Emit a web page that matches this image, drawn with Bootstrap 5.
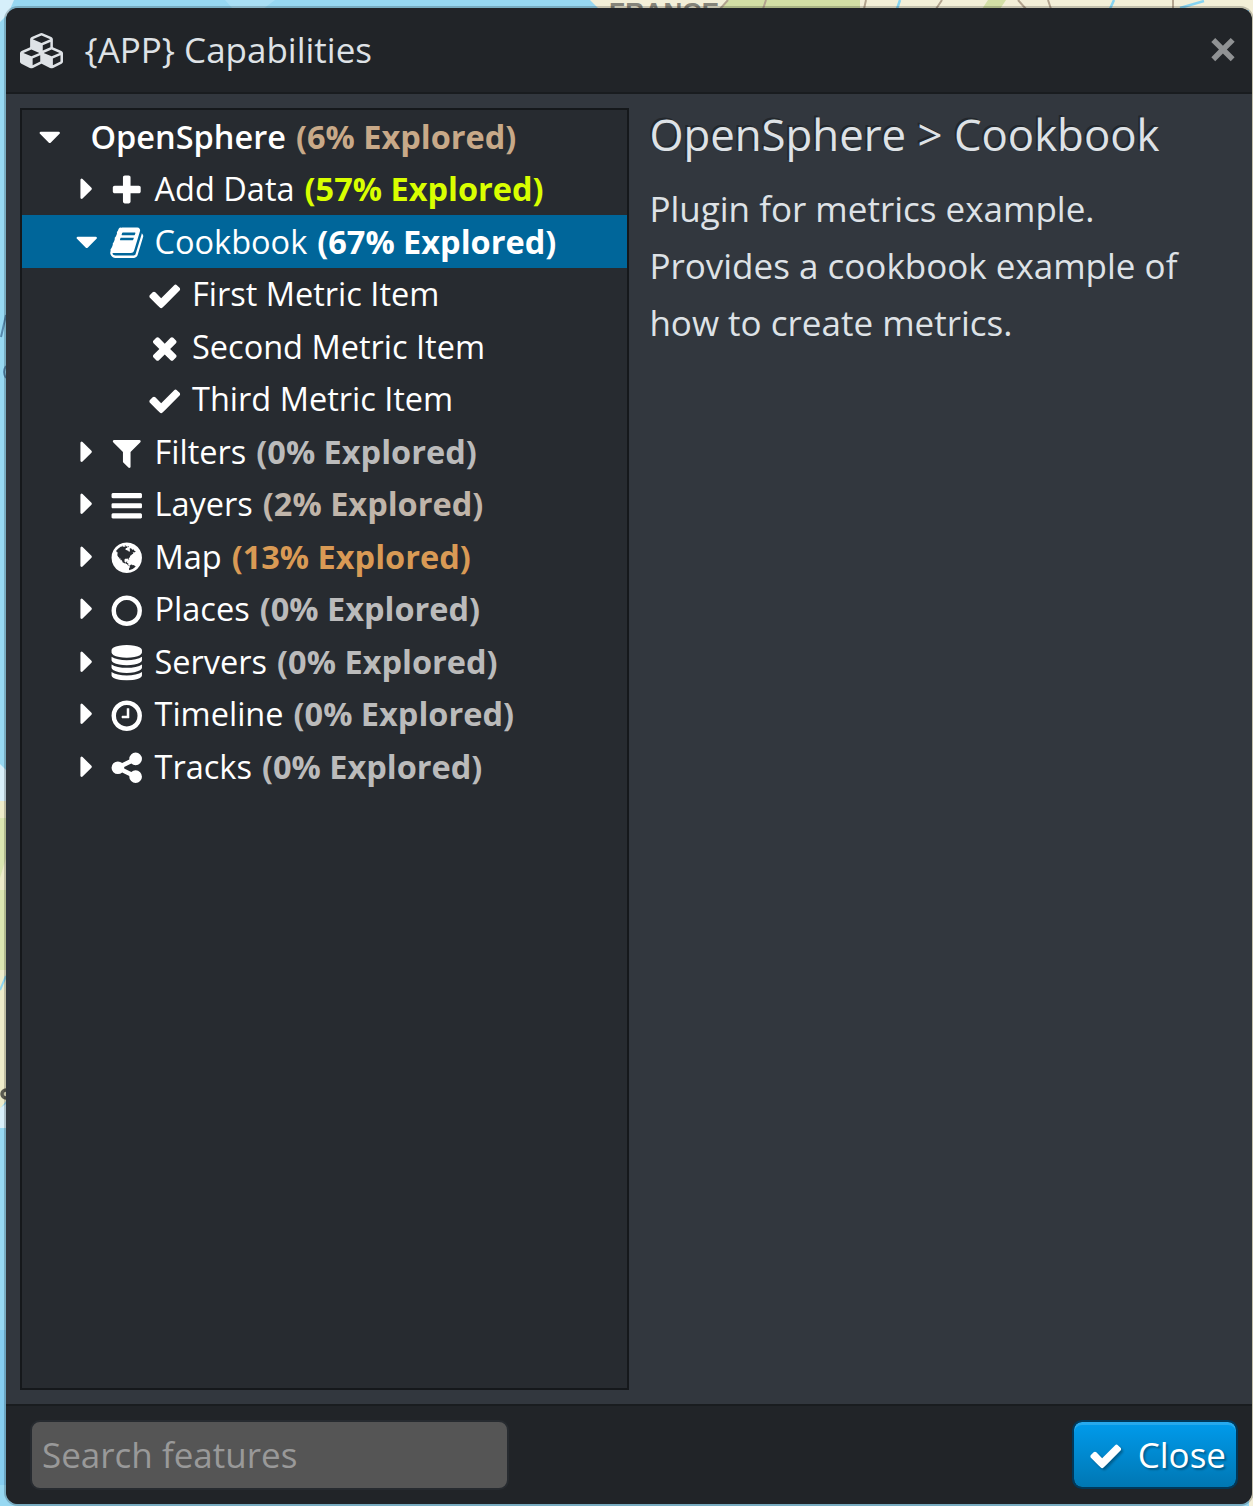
<!DOCTYPE html>
<html lang="en">
<head>
<meta charset="utf-8">
<title>{APP} Capabilities</title>
<meta name="viewport" content="width=device-width, initial-scale=1">
<link href="https://cdn.jsdelivr.net/npm/bootstrap@5.3.0/dist/css/bootstrap.min.css" rel="stylesheet">
<style>
  html, body { height: 100%; }
  body { font-family: "Open Sans", "Noto Sans", sans-serif; font-size: 35px; line-height: 1.5; color: #dee2e6; background: #97d8f2; overflow: hidden; }
  .map-back { position: absolute; inset: 0; width: 1253px; height: 1506px; z-index: 0; }
  .stage { height: 1506px; padding: 6px 0 0 4px; z-index: 1; }
  .win { width: 1250px; height: 1500px; border: 2px solid rgba(0,0,0,.2); border-radius: 14px; background-clip: padding-box; background-color: #32373e; overflow: hidden; }
  .win-head { height: 86px; padding: 0 14px 2px; background: #212428; border-bottom: 2px solid #191c1f; }
  .win-head .ico { width: 43px; margin-top: 4px; }
  .win-title { font-size: 35px; line-height: 1; margin-left: 21.5px; font-weight: 400; }
  .win-x { color: #909294; padding: 0 0 2px; border: 0; background: none; line-height: 1; font-size: 52.5px; font-weight: 700; }
  .win-main { padding: 14px; gap: 20.4px; min-height: 0; }
  .tree { width: 609px; border: 2px solid #15181b; background: #272b30; color: #fff; font-size: 32.5px; }
  .tree-row { height: 52.5px; white-space: nowrap; line-height: 52px; padding-top: 1px; }
  .tree-row.lv0 { padding-left: 10px; }
  .tree-row.lv1 { padding-left: 47px; }
  .tree-row.lv2 { padding-left: 125px; }
  .tree-row.active { background: #00669a; }
  .tree-row b { font-weight: 700; margin-left: 10px; }
  .ico { width: 35.5px; height: 35.5px; fill: currentColor; flex: none; }
  .twist { margin-right: 4.5px; position: relative; top: -.5px; }
  .kind { margin-right: 10px; position: relative; top: 1px; }
  .lv2 .kind { margin-right: 9.5px; }
  .lbl0 { margin-left: 23px; font-weight: 600; }
  .lv0 .ico { margin-top: -1px; }
  .p0 { color: #bbb; } .p2 { color: #c0b5aa; } .p6 { color: #c8a988; } .p13 { color: #d99a55; } .p57 { color: #d9ff00; }
  .info h3 { font-size: 43.75px; line-height: 53px; margin: 0 0 19px; font-weight: 400; text-shadow: -2px -2px 0 rgba(0,0,0,.3); }
  .info p { line-height: 57px; margin: 0; width: 560px; }
  .win-foot { height: 100px; padding: 14px 14px 14px 24px; background: #212428; border-top: 2px solid #191c1f; }
  .find { width: 479px; height: 70px; font-size: 35px; padding: 0 10px 2px; border: 2px solid #272b30; border-radius: 10px; background: #555 !important; }
  .find::placeholder { color: #999; opacity: 1; }
  .btn-go { width: 166px; height: 69px; margin-bottom: 1px; font-size: 35px; line-height: 1; color: #fff; padding: 0 10px 0 14px; border: 2px solid #00385a; border-radius: 10px; background: linear-gradient(#009bec, #0077b3) padding-box; box-shadow: inset 0 3px 0 rgba(255,255,255,.15); text-shadow: 2px 2px 2px rgba(0,0,0,.3); }
  .btn-go .ico { filter: drop-shadow(2px 2px 1px rgba(0,0,0,.3)); margin-top: 3px; }
</style>
</head>
<body>
<svg class="d-none" aria-hidden="true">
  <symbol id="check" viewBox="0 0 1792 1792"><path d="M1671 566q0 40-28 68l-724 724-136 136q-28 28-68 28t-68-28l-136-136-362-362q-28-28-28-68t28-68l136-136q28-28 68-28t68 28l294 295 656-657q28-28 68-28t68 28l136 136q28 28 28 68z"/></symbol>
  <symbol id="times" viewBox="0 0 1792 1792"><path d="M1490 1322q0 40-28 68l-136 136q-28 28-68 28t-68-28l-294-294-294 294q-28 28-68 28t-68-28l-136-136q-28-28-28-68t28-68l294-294-294-294q-28-28-28-68t28-68l136-136q28-28 68-28t68 28l294 294 294-294q28-28 68-28t68 28l136 136q28 28 28 68t-28 68l-294 294 294 294q28 28 28 68z"/></symbol>
  <symbol id="plus" viewBox="0 0 1792 1792"><path d="M1600 736v192q0 40-28 68t-68 28h-416v416q0 40-28 68t-68 28h-192q-40 0-68-28t-28-68v-416h-416q-40 0-68-28t-28-68v-192q0-40 28-68t68-28h416v-416q0-40 28-68t68-28h192q40 0 68 28t28 68v416h416q40 0 68 28t28 68z"/></symbol>
  <symbol id="filter" viewBox="0 0 1792 1792"><path d="M1595 295q17 41-14 70l-493 493v742q0 42-39 59-13 5-25 5-27 0-45-19l-256-256q-19-19-19-45v-486l-493-493q-31-29-14-70 17-39 59-39h1280q42 0 59 39z"/></symbol>
  <symbol id="bars" viewBox="0 0 1792 1792"><path d="M1664 1344v128q0 26-19 45t-45 19h-1408q-26 0-45-19t-19-45v-128q0-26 19-45t45-19h1408q26 0 45 19t19 45zm0-512v128q0 26-19 45t-45 19h-1408q-26 0-45-19t-19-45v-128q0-26 19-45t45-19h1408q26 0 45 19t19 45zm0-512v128q0 26-19 45t-45 19h-1408q-26 0-45-19t-19-45v-128q0-26 19-45t45-19h1408q26 0 45 19t19 45z"/></symbol>
  <symbol id="circle" viewBox="0 0 1792 1792"><path d="M896 352q-148 0-273 73t-198 198-73 273 73 273 198 198 273 73 273-73 198-198 73-273-73-273-198-198-273-73zm768 544q0 209-103 385.5t-279.5 279.5-385.5 103-385.5-103-279.5-279.5-103-385.5 103-385.5 279.5-279.5 385.5-103 385.5 103 279.5 279.5 103 385.5z"/></symbol>
  <symbol id="clock" viewBox="0 0 1792 1792"><path d="M1024 544v448q0 14-9 23t-23 9h-320q-14 0-23-9t-9-23v-64q0-14 9-23t23-9h224v-352q0-14 9-23t23-9h64q14 0 23 9t9 23zm416 352q0-148-73-273t-198-198-273-73-273 73-198 198-73 273 73 273 198 198 273 73 273-73 198-198 73-273zm224 0q0 209-103 385.5t-279.5 279.5-385.5 103-385.5-103-279.5-279.5-103-385.5 103-385.5 279.5-279.5 385.5-103 385.5 103 279.5 279.5 103 385.5z"/></symbol>
  <symbol id="database" viewBox="0 0 1792 1792"><path d="M896 768q237 0 443-43t325-127v170q0 69-103 128t-280 93.5-385 34.5-385-34.5-280-93.5-103-128v-170q119 84 325 127t443 43zm0 768q237 0 443-43t325-127v170q0 69-103 128t-280 93.5-385 34.5-385-34.5-280-93.5-103-128v-170q119 84 325 127t443 43zm0-384q237 0 443-43t325-127v170q0 69-103 128t-280 93.5-385 34.5-385-34.5-280-93.5-103-128v-170q119 84 325 127t443 43zm0-1152q208 0 385 34.5t280 93.5 103 128v128q0 69-103 128t-280 93.5-385 34.5-385-34.5-280-93.5-103-128v-128q0-69 103-128t280-93.5 385-34.5z"/></symbol>
  <symbol id="share" viewBox="0 0 1792 1792"><path d="M1344 1024q133 0 226.5 93.5t93.5 226.5-93.5 226.5-226.5 93.5-226.5-93.5-93.5-226.5q0-12 2-34l-360-180q-92 86-218 86-133 0-226.5-93.5t-93.5-226.5 93.5-226.5 226.5-93.5q126 0 218 86l360-180q-2-22-2-34 0-133 93.5-226.5t226.5-93.5 226.5 93.5 93.5 226.5-93.5 226.5-226.5 93.5q-126 0-218-86l-360 180q2 22 2 34t-2 34l360 180q92-86 218-86z"/></symbol>
  <symbol id="down" viewBox="0 0 1792 1792"><path d="M1408 704q0 26-19 45l-448 448q-19 19-45 19t-45-19l-448-448q-19-19-19-45t19-45 45-19h896q26 0 45 19t19 45z"/></symbol>
  <symbol id="right" viewBox="0 0 1792 1792"><path d="M1152 896q0 26-19 45l-448 448q-19 19-45 19t-45-19-19-45v-896q0-26 19-45t45-19 45 19l448 448q19 19 19 45z"/></symbol>
  <symbol id="book" viewBox="0 0 1792 1792"><path d="M1703 478q40 57 18 129l-275 906q-19 64-76.5 107.5t-122.5 43.5h-923q-77 0-148.5-53.5t-99.5-131.5q-24-67-2-127 0-4 3-27t4-37q1-8-3-21.5t-3-19.5q2-11 8-21t16.5-23.5 16.5-23.5q23-38 45-91.5t30-91.5q3-10 .5-30t-.5-28q3-11 17-28t17-23q21-36 42-92t25-90q1-9-2.5-32t.5-28q4-13 22-30.5t22-22.5q19-26 42.5-84.5t27.5-96.5q1-8-3-25.5t-2-26.5q2-8 9-18t18-23 17-21q8-12 16.5-30.5t15-35 16-36 19.5-32 26.5-23.5 36-11.5 47.5 5.5l-1 3q38-9 51-9h761q74 0 114 56t18 130l-274 906q-36 119-71.5 153.5t-128.5 34.5h-869q-27 0-38 15-11 16-1 43 24 70 144 70h923q29 0 56-15.5t35-41.5l300-987q7-22 5-57 38 15 59 43zm-1064 2q-4 13 2 22.5t20 9.5h608q13 0 25.5-9.5t16.5-22.5l21-64q4-13-2-22.5t-20-9.5h-608q-13 0-25.5 9.5t-16.5 22.5zm-83 256q-4 13 2 22.5t20 9.5h608q13 0 25.5-9.5t16.5-22.5l21-64q4-13-2-22.5t-20-9.5h-608q-13 0-25.5 9.5t-16.5 22.5z"/></symbol>
  <symbol id="globe" viewBox="0 0 1792 1792"><path d="M896 128q209 0 385.5 103t279.5 279.5 103 385.5-103 385.5-279.5 279.5-385.5 103-385.5-103-279.5-279.5-103-385.5 103-385.5 279.5-279.5 385.5-103zm274 521q-2 1-9.5 9.5t-13.5 9.5q2 0 4.5-5t5-11 3.5-7q6-7 22-15 14-6 52-12 34-8 51 11-2-2 9.5-13t14.5-12q3-2 15-4.5t15-7.5l2-22q-12 1-17.5-7t-6.5-21q0 2-6 8 0-7-4.5-8t-11.5 1-9 1q-10-3-15-7.5t-8-16.5-4-15q-2-5-9.5-11t-9.5-10q-1-2-2.5-5.5t-3-6.5-4-5.5-5.5-2.5-7 5-7.5 10-4.5 5q-3-2-6-1.5t-4.5 1-4.5 3-5 3.5q-3 2-8.5 3t-8.5 2q15-5-1-11-10-4-16-3 9-4 7.5-12t-8.5-14h5q-1-4-8.5-8.5t-17.5-8.5-13-6q-8-5-34-9.5t-33-.5q-5 6-4.5 10.5t4 14 3.5 12.5q1 6-5.5 13t-6.5 12q0 7 14 15.5t10 21.5q-3 8-16 16t-16 12q-5 8-1.5 18.5t10.5 16.5q2 2 1.5 4t-3.5 4.5-5.5 4-6.5 3.5l-3 2q-11 5-20.5-6t-13.5-26q-7-25-16-30-23-8-29 1-5-13-41-26-25-9-58-4 6-1 0-15-7-15-19-12 3-6 4-17.5t1-13.5q3-13 12-23 1-1 7-8.5t9.5-13.5.5-6q35 4 50-11 5-5 11.5-17t10.5-17q9-6 14-5.5t14.5 5.5 14.5 5q14 1 15.5-11t-7.5-20q12 1 3-17-4-7-8-9-12-4-27 5-8 4 2 8-1-1-9.5 10.5t-16.5 17.5-16-5q-1-1-5.5-13.5t-9.5-13.5q-8 0-16 15 3-8-11-15t-24-8q19-12-8-27-7-4-20.5-5t-19.5 4q-5 7-5.5 11.5t5 8 10.5 5.5 11.5 4 8.5 3q14 10 8 14-2 1-8.5 3.5t-11.5 4.5-6 4q-3 4 0 14t-2 14q-5-5-9-17.5t-7-16.5q7 9-25 6l-10-1q-4 0-16 2t-20.5 1-13.5-8q-4-8 0-20 1-4 4-2-4-3-11-9.5t-10-8.5q-46 15-94 41 6 1 12-1 5-2 13-6.5t10-5.5q34-14 42-7l5-5q14 16 20 25-7-4-30-1-20 6-22 12 7 12 5 18-4-3-11.5-10t-14.5-11-15-5q-16 0-22 1-146 80-235 222 7 7 12 8 4 1 5 9t2.5 11 11.5-3q9 8 3 19 1-1 44 27 19 17 21 21 3 11-10 18-1-2-9-9t-9-4q-3 5 .5 18.5t10.5 12.5q-7 0-9.5 16t-2.5 35.5-1 23.5l2 1q-3 12 5.5 34.5t21.5 19.5q-13 3 20 43 6 8 8 9 3 2 12 7.5t15 10 10 10.5q4 5 10 22.5t14 23.5q-2 6 9.5 20t10.5 23q-1 0-2.5 1t-2.5 1q3 7 15.5 14t15.5 13q1 3 2 10t3 11 8 2q2-20-24-62-15-25-17-29-3-5-5.5-15.5t-4.5-14.5q2 0 6 1.5t8.5 3.5 7.5 4 2 3q-3 7 2 17.5t12 18.5 17 19 12 13q6 6 14 19.5t0 13.5q9 0 20 10.5t17 19.5q5 8 8 26t5 24q2 7 8.5 13.5t12.5 9.5l16 8 13 7q5 2 18.5 10.5t21.5 11.5q10 4 16 4t14.5-2.5 13.5-3.5q15-2 29 15t21 21q36 19 55 11-2 1 .5 7.5t8 15.5 9 14.5 5.5 8.5q5 6 18 15t18 15q6-4 7-9-3 8 7 20t18 10q14-3 14-32-31 15-49-18 0-1-2.5-5.5t-4-8.5-2.5-8.5 0-7.5 5-3q9 0 10-3.5t-2-12.5-4-13q-1-8-11-20t-12-15q-5 9-16 8t-16-9q0 1-1.5 5.5t-1.5 6.5q-13 0-15-1 1-3 2.5-17.5t3.5-22.5q1-4 5.5-12t7.5-14.5 4-12.5-4.5-9.5-17.5-2.5q-19 1-26 20-1 3-3 10.5t-5 11.5-9 7q-7 3-24 2t-24-5q-13-8-22.5-29t-9.5-37q0-10 2.5-26.5t3-25-5.5-24.5q3-2 9-9.5t10-10.5q2-1 4.5-1.5t4.5 0 4-1.5 3-6q-1-1-4-3-3-3-4-3 7 3 28.5-1.5t27.5 1.5q15 11 22-2 0-1-2.5-9.5t-.5-13.5q5 27 29 9 3 3 15.5 5t17.5 5q3 2 7 5.5t5.5 4.5 5-.5 8.5-6.5q10 14 12 24 11 40 19 44 7 3 11 2t4.5-9.5 0-14-1.5-12.5l-1-8v-18l-1-8q-15-3-18.5-12t1.5-18.5 15-18.5q1-1 8-3.5t15.5-6.5 12.5-8q21-19 15-35 7 0 11-9-1 0-5-3t-7.5-5-4.5-2q9-5 2-16 5-3 7.5-11t7.5-10q9 12 21 2 7-8 1-16 5-7 20.5-10.5t18.5-9.5q7 2 8-2t1-12 3-12q4-5 15-9t13-5l17-11q3-4 0-4 18 2 31-11 10-11-6-20 3-6-3-9.5t-15-5.5q3-1 11.5-.5t10.5-1.5q15-10-7-16-17-5-43 12zm-163 877q206-36 351-189-3-3-12.5-4.5t-12.5-3.5q-18-7-24-8 1-7-2.5-13t-8-9-12.5-8-11-7q-2-2-7-6t-7-5.5-7.5-4.5-8.5-2-10 1l-3 1q-3 1-5.5 2.5t-5.5 3-4 3 0 2.5q-21-17-36-22-5-1-11-5.5t-10.5-7-10-1.5-11.5 7q-5 5-6 15t-2 13q-7-5 0-17.5t2-18.5q-3-6-10.5-4.5t-12 4.5-11.5 8.5-9 6.5-8.5 5.5-8.5 7.5q-3 4-6 12t-5 11q-2-4-11.5-6.5t-9.5-5.5q2 10 4 35t5 38q7 31-12 48-27 25-29 40-4 22 12 26 0 7-8 20.5t-7 21.5q0 6 2 16z"/></symbol>
  <symbol id="cubes" viewBox="0 0 2176 1792"><path d="M640 1632l384-192v-314l-384 164v342zm-64-454l404-173-404-173-404 173zm1088 454l384-192v-314l-384 164v342zm-64-454l404-173-404-173-404 173zm-448-293l384-165v-266l-384 164v267zm-64-379l441-189-441-189-441 189zm1088 518v416q0 36-19 67t-52 47l-448 224q-25 14-57 14t-57-14l-448-224q-4-2-7-4-2 2-7 4l-448 224q-25 14-57 14t-57-14l-448-224q-33-16-52-47t-19-67v-416q0-38 21.5-70t56.5-48l434-186v-400q0-38 21.5-70t56.5-48l448-192q23-10 50-10t50 10l448 192q35 16 56.5 48t21.5 70v400l434 186q36 16 57 48t21 70z"/></symbol>
</svg>

<!-- Slice of the map that shows around the window -->
<svg class="map-back" viewBox="0 0 1253 1506" aria-hidden="true">
  <rect width="1253" height="1506" fill="#97d8f2"/>
  <path d="M0 0h14L8 14 0 22z" fill="#d6effa"/>
  <path d="M225 0h50l-12 9h-30z" fill="#a9dff5"/>
  <path d="M590 0h663v1506h-4V10H600z" fill="#f3efd8"/>
  <path d="M728 0h132v9H720zM988 0h18l-6 9h-18z" fill="#d3dfa6"/>
  <path d="M728 0l-8 9M766 0l-3 9M866 0l-2 9M942 0l-6 9M1018 0l8 9M1048 0l3 9M1173 0v9" stroke="#b3a48f" stroke-width="2" fill="none"/>
  <path d="M900 0l-3 9M1114 0l-4 9M1180 8l24-7" stroke="#86d4f2" stroke-width="2.5" fill="none"/>
  <text x="609" y="21" font-family="Liberation Sans, sans-serif" font-weight="700" font-size="26" textLength="110" fill="#85847a">FRANCE</text>
  <path d="M0 764l6 6v32H0z" fill="#d9f0fa"/>
  <path d="M0 801h6v300l-6 8z" fill="#eeeccb"/>
  <path d="M0 818h6v40l-6 20zM0 890h6v80H0z" fill="#dbe6b2"/>
  <path d="M0 990l6-14" stroke="#8fd6f0" stroke-width="2"/>
  <circle cx="6" cy="1094" r="4" fill="none" stroke="#5a5a50" stroke-width="3.5"/>
  <path d="M0 1108l6-4v24H0z" fill="#d9f0fa"/>
  <path d="M1 337l5-22M6 366q-4 6 0 12" stroke="#5688ab" stroke-width="2" fill="none"/>
  <path d="M0 1330h6v155H0z" fill="#86cdf0"/>
</svg>

<div class="stage position-relative">
  <div class="win d-flex flex-column">
    <header class="win-head d-flex align-items-center">
      <svg class="ico"><use href="#cubes"/></svg>
      <h1 class="win-title mb-0">{APP} Capabilities</h1>
      <button class="win-x ms-auto" aria-label="Close">&times;</button>
    </header>

    <main class="win-main d-flex flex-grow-1">
      <div class="tree flex-shrink-0">
        <div class="tree-row lv0 d-flex align-items-center"><svg class="ico"><use href="#down"/></svg><span class="lbl0">OpenSphere</span><b class="p6">(6% Explored)</b></div>
        <div class="tree-row lv1 d-flex align-items-center"><svg class="ico twist"><use href="#right"/></svg><svg class="ico kind"><use href="#plus"/></svg><span>Add Data</span><b class="p57">(57% Explored)</b></div>
        <div class="tree-row lv1 active d-flex align-items-center"><svg class="ico twist"><use href="#down"/></svg><svg class="ico kind"><use href="#book"/></svg><span>Cookbook</span><b>(67% Explored)</b></div>
        <div class="tree-row lv2 d-flex align-items-center"><svg class="ico kind"><use href="#check"/></svg><span>First Metric Item</span></div>
        <div class="tree-row lv2 d-flex align-items-center"><svg class="ico kind"><use href="#times"/></svg><span>Second Metric Item</span></div>
        <div class="tree-row lv2 d-flex align-items-center"><svg class="ico kind"><use href="#check"/></svg><span>Third Metric Item</span></div>
        <div class="tree-row lv1 d-flex align-items-center"><svg class="ico twist"><use href="#right"/></svg><svg class="ico kind"><use href="#filter"/></svg><span>Filters</span><b class="p0">(0% Explored)</b></div>
        <div class="tree-row lv1 d-flex align-items-center"><svg class="ico twist"><use href="#right"/></svg><svg class="ico kind"><use href="#bars"/></svg><span>Layers</span><b class="p2">(2% Explored)</b></div>
        <div class="tree-row lv1 d-flex align-items-center"><svg class="ico twist"><use href="#right"/></svg><svg class="ico kind"><use href="#globe"/></svg><span>Map</span><b class="p13">(13% Explored)</b></div>
        <div class="tree-row lv1 d-flex align-items-center"><svg class="ico twist"><use href="#right"/></svg><svg class="ico kind"><use href="#circle"/></svg><span>Places</span><b class="p0">(0% Explored)</b></div>
        <div class="tree-row lv1 d-flex align-items-center"><svg class="ico twist"><use href="#right"/></svg><svg class="ico kind"><use href="#database"/></svg><span>Servers</span><b class="p0">(0% Explored)</b></div>
        <div class="tree-row lv1 d-flex align-items-center"><svg class="ico twist"><use href="#right"/></svg><svg class="ico kind"><use href="#clock"/></svg><span>Timeline</span><b class="p0">(0% Explored)</b></div>
        <div class="tree-row lv1 d-flex align-items-center"><svg class="ico twist"><use href="#right"/></svg><svg class="ico kind"><use href="#share"/></svg><span>Tracks</span><b class="p0">(0% Explored)</b></div>
      </div>
      <section class="info flex-grow-1">
        <h3>OpenSphere &gt; Cookbook</h3>
        <p>Plugin for metrics example. Provides a cookbook example of how to create metrics.</p>
      </section>
    </main>

    <footer class="win-foot d-flex align-items-center justify-content-between">
      <input class="form-control find" type="text" placeholder="Search features" aria-label="Search features">
      <button class="btn btn-go d-flex align-items-center justify-content-between"><svg class="ico"><use href="#check"/></svg><span>Close</span></button>
    </footer>
  </div>
</div>
<script src="https://cdn.jsdelivr.net/npm/bootstrap@5.3.0/dist/js/bootstrap.bundle.min.js"></script>
</body>
</html>
